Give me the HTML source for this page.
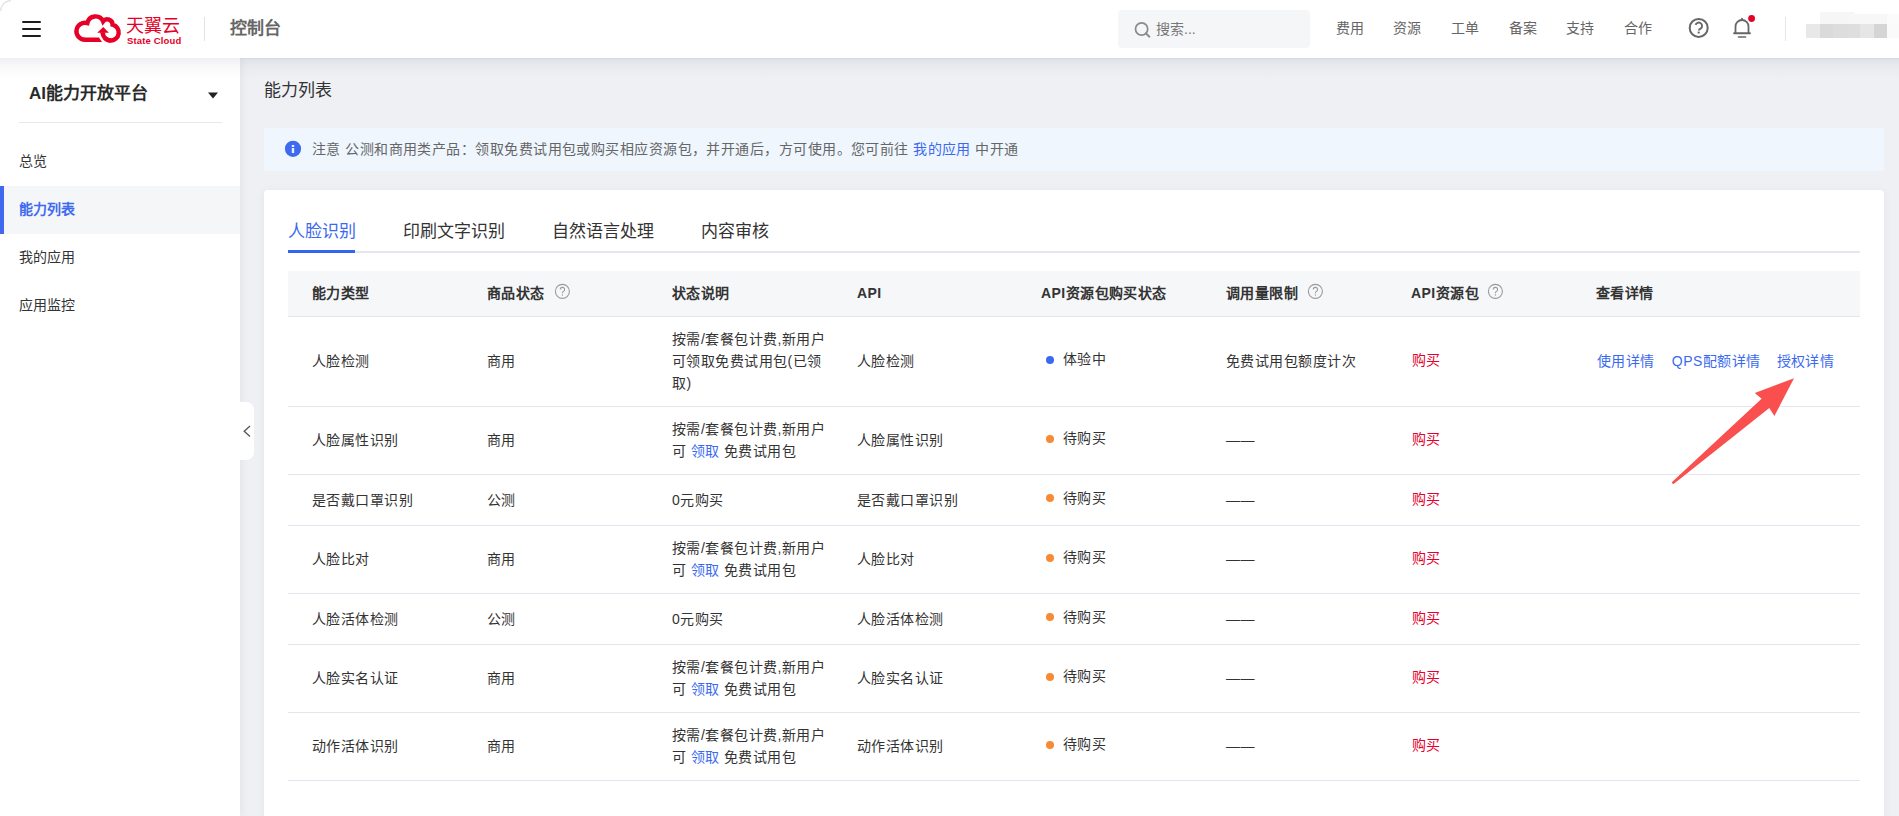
<!DOCTYPE html>
<html lang="zh-CN"><head><meta charset="utf-8">
<style>
*{margin:0;padding:0;box-sizing:border-box}
html,body{width:1899px;height:816px;overflow:hidden;background:#eff0f3;font-family:"Liberation Sans",sans-serif;color:#333}
.abs{position:absolute}
#hdr{position:absolute;left:0;top:0;width:1899px;height:58px;background:#fff;z-index:3;}
#side{position:absolute;left:0;top:58px;width:240px;height:758px;background:#fff;z-index:2;box-shadow:2px 0 8px rgba(0,20,60,0.05)}
.nav{position:absolute;top:18px;font-size:14px;color:#666;line-height:21px;letter-spacing:0.45px}
.menu{position:absolute;left:0;width:240px;height:48px;line-height:47px;padding-left:19px;font-size:14px;color:#333}
.menu.act{background:#f5f6f8;color:#3f6af0;font-weight:bold;border-left:4px solid #3f6af0;padding-left:15px}
#main{position:absolute;left:240px;top:58px;width:1659px;height:758px}
.tab{position:absolute;top:221px;font-size:17px;line-height:22px;color:#333}
table{border-collapse:collapse;table-layout:fixed}
td,th{font-size:14px;letter-spacing:0.45px;line-height:22px;color:#333;text-align:left;padding:0 0 0 24px;vertical-align:middle;font-weight:normal}
th{font-weight:bold;height:45px}
tr.r td,tr.r th{border-bottom:1px solid #e3e6ee}
.q{display:inline-block;width:14px;height:14px;border:1px solid #999;border-radius:50%;font-size:10px;line-height:12px;text-align:center;color:#999;font-weight:normal;margin-left:10px;vertical-align:1px}
a{color:#3b6af0;text-decoration:none}
.red{color:#e6002d;position:relative;left:1px;top:-1px}
.dot{display:inline-block;width:8px;height:8px;border-radius:50%;margin:0 9px 0 5px;vertical-align:0.5px}
.st{position:relative;top:-2px}
</style></head><body>
<div id="hdr">
  <!-- hamburger -->
  <div class="abs" style="left:22px;top:21px;width:19px;height:2px;background:#1e1e1e;border-radius:1px"></div>
  <div class="abs" style="left:22px;top:28px;width:19px;height:2px;background:#1e1e1e;border-radius:1px"></div>
  <div class="abs" style="left:22px;top:35px;width:19px;height:2px;background:#1e1e1e;border-radius:1px"></div>
  <!-- logo -->
  <svg class="abs" style="left:70px;top:10px" width="55" height="38" viewBox="0 0 55 38">
    <path d="M14.9 29.7 A8.5 8.5 0 1 1 17.36 13.06 A8.3 8.3 0 0 1 33.1 11.37 A5.3 5.3 0 0 1 42.6 14.73 A8 8 0 1 1 32.7 22.5" fill="none" stroke="#e60027" stroke-width="4.4"/>
    <path d="M14.3 27.5 L29 27.5 L32 31.9 L14.3 31.9Z" fill="#e60027"/>
    <path d="M32.7 23.5 A8 8 0 0 0 35 28.2" fill="none" stroke="#fff" stroke-width="8"/>
    <path d="M32.7 22.5 A8 8 0 0 0 40.7 30.5" fill="none" stroke="#e60027" stroke-width="4.6"/>
    <path d="M27.2 22.8 L33.3 17.1 L38.9 22.8Z" fill="#e60027"/>
  </svg>
  <div class="abs" style="left:126px;top:16px;font-size:18px;line-height:20px;color:#e60027;letter-spacing:0.2px">天翼云</div>
  <div class="abs" style="left:127px;top:35.5px;font-size:9.5px;line-height:10px;color:#e60027;letter-spacing:0.15px;font-weight:bold">State Cloud</div>
  <div class="abs" style="left:204px;top:17px;width:1px;height:24px;background:#e3e3e3"></div>
  <div class="abs" style="left:230px;top:18px;font-size:17px;line-height:22px;color:#666;font-weight:bold">控制台</div>
  <!-- search -->
  <div class="abs" style="left:1118px;top:10px;width:192px;height:38px;background:#f5f6f8;border-radius:4px"></div>
  <div class="abs" style="left:1156px;top:19px;font-size:14px;line-height:20px;color:#777">搜索...</div>
  <svg class="abs" style="left:1118px;top:10px" width="40" height="38" viewBox="1118 10 40 38">
    <circle cx="1141.6" cy="29" r="6.1" fill="none" stroke="#8a8a8a" stroke-width="1.7"/>
    <path d="M1145.8 33.3 L1149.4 36.7" stroke="#8a8a8a" stroke-width="1.9" stroke-linecap="round"/>
  </svg>
  <svg class="abs" style="left:1680px;top:8px" width="80" height="40" viewBox="1680 8 80 40">
    <circle cx="1698.7" cy="27.9" r="9" fill="none" stroke="#666" stroke-width="2"/>
    <path d="M1695.6 24.9 A3.3 3.3 0 1 1 1701.2 28.1 Q1698.9 29.4 1698.8 30.5" fill="none" stroke="#666" stroke-width="1.9"/>
    <rect x="1697.7" y="31.6" width="2" height="1.9" fill="#666"/>
    <path d="M1735.5 33 V26.5 A6.5 6.5 0 0 1 1748.5 26.5 V33" fill="none" stroke="#666" stroke-width="1.8"/>
    <path d="M1734.1 33.2 H1749.9" stroke="#666" stroke-width="1.9" stroke-linecap="round"/>
    <path d="M1738.5 37 H1745.5" stroke="#666" stroke-width="1.6" stroke-linecap="round"/>
    <path d="M1742 18.6 V20.2" stroke="#666" stroke-width="1.8" stroke-linecap="round"/>
    <circle cx="1751.6" cy="18.5" r="3.4" fill="#e60027"/>
  </svg>
  <div class="nav" style="left:1336px">费用</div>
  <div class="nav" style="left:1393px">资源</div>
  <div class="nav" style="left:1451px">工单</div>
  <div class="nav" style="left:1509px">备案</div>
  <div class="nav" style="left:1566px">支持</div>
  <div class="nav" style="left:1624px">合作</div>
  <div class="abs" style="left:1785px;top:17px;width:1px;height:24px;background:#e4e6ec"></div>
  <div class="abs" style="left:1820px;top:12px;width:34px;height:12px;background:#f6f6f6"></div>
  <div class="abs" style="left:1847px;top:14px;width:40px;height:10px;background:#f7f7f7"></div>
  <div class="abs" style="left:1887px;top:14px;width:12px;height:10px;background:#fbfbfb"></div>
  <div class="abs" style="left:1806px;top:24px;width:14px;height:14px;background:#e8e8e8"></div>
  <div class="abs" style="left:1820px;top:24px;width:13px;height:14px;background:#dadada"></div>
  <div class="abs" style="left:1833px;top:24px;width:14px;height:14px;background:#dddddd"></div>
  <div class="abs" style="left:1847px;top:24px;width:13px;height:14px;background:#dedede"></div>
  <div class="abs" style="left:1860px;top:24px;width:14px;height:14px;background:#e6e6e6"></div>
  <div class="abs" style="left:1874px;top:24px;width:13px;height:14px;background:#d5d5d5"></div>
  <div class="abs" style="left:1887px;top:24px;width:12px;height:14px;background:#fafafa"></div>
</div>
<div class="abs" style="left:0;top:58px;width:1899px;height:20px;background:linear-gradient(rgba(30,40,90,0.075),rgba(30,40,90,0.03) 40%,rgba(30,40,90,0));z-index:3"></div>
<div class="abs" style="left:240px;top:58px;width:1659px;height:2px;background:linear-gradient(rgba(30,40,90,0.05),rgba(30,40,90,0.0));z-index:3"></div>
<div id="side">
  <div class="abs" style="left:29px;top:25px;font-size:17px;line-height:22px;font-weight:bold;color:#2a2a2a">AI能力开放平台</div>
  <div class="abs" style="left:19px;top:64px;width:203px;height:1px;background:#e6e8ee"></div>
  <svg class="abs" style="left:206px;top:33px" width="14" height="10" viewBox="0 0 14 10"><path d="M2 1.5 H12 L7 7.5Z" fill="#222"/></svg>
  <div class="menu" style="top:80px">总览</div>
  <div class="menu act" style="top:128px">能力列表</div>
  <div class="menu" style="top:176px">我的应用</div>
  <div class="menu" style="top:224px">应用监控</div>
</div>
<div class="abs" style="left:240px;top:402px;width:14px;height:58px;background:#fff;border-radius:0 8px 8px 0;z-index:2"></div>
<svg class="abs" style="left:240px;top:420px;z-index:2" width="14" height="22" viewBox="0 0 14 22"><path d="M10 6 L4.2 11.2 L10 16.4" fill="none" stroke="#555" stroke-width="1.3"/></svg>
<svg class="abs" style="left:0;top:0;z-index:4" width="14" height="14" viewBox="0 0 14 14"><path d="M0.6 11 A10.4 10.4 0 0 1 11 0.6" fill="none" stroke="#e2e2e2" stroke-width="1.2"/></svg>
<div class="abs" style="left:264px;top:80px;font-size:17px;line-height:22px;color:#333">能力列表</div>
<div class="abs" style="left:264px;top:128px;width:1620px;height:43px;background:#eff6fe"></div>
<svg class="abs" style="left:284px;top:140px" width="18" height="18" viewBox="0 0 18 18"><circle cx="9" cy="8.8" r="8.1" fill="#3f6af0"/><rect x="7.8" y="5" width="2.4" height="2" fill="#e8efff"/><rect x="7.8" y="8" width="2.4" height="5" fill="#e8efff"/></svg>
<div class="abs" style="left:312px;top:139px;font-size:14px;letter-spacing:0.45px;line-height:20px;color:#666">注意 公测和商用类产品：领取免费试用包或购买相应资源包，并开通后，方可使用。您可前往 <a>我的应用</a> 中开通</div>
<div class="abs" style="left:264px;top:190px;width:1620px;height:640px;background:#fff;border-radius:4px;box-shadow:0 1px 10px rgba(20,30,60,0.05)"></div>
<div class="tab" style="left:288px;color:#3b6af0">人脸识别</div>
<div class="tab" style="left:403px">印刷文字识别</div>
<div class="tab" style="left:552px">自然语言处理</div>
<div class="tab" style="left:701px">内容审核</div>
<div class="abs" style="left:288px;top:251px;width:1572px;height:2px;background:#e4e7ee"></div>
<div class="abs" style="left:288px;top:250px;width:67px;height:3px;background:#3366f0"></div>
<table class="abs" style="left:288px;top:271px;width:1572px">
<colgroup><col style="width:175px"><col style="width:185px"><col style="width:185px"><col style="width:184px"><col style="width:185px"><col style="width:185px"><col style="width:185px"><col style="width:288px"></colgroup>
<tr class="r" style="background:#f6f7f9"><th>能力类型</th><th>商品状态</th><th>状态说明</th><th>API</th><th>API资源包购买状态</th><th>调用量限制</th><th>API资源包</th><th>查看详情</th></tr>
<tr class="r" style="height:90px"><td>人脸检测</td><td>商用</td><td>按需/套餐包计费,新用户可领取免费试用包(已领取)</td><td>人脸检测</td><td class="st"><span class="dot" style="background:#3b6af0"></span>体验中</td><td>免费试用包额度计次</td><td class="red">购买</td><td style="white-space:nowrap"><a style="margin-left:1px">使用详情</a><a style="margin-left:17px">QPS配额详情</a><a style="margin-left:16px">授权详情</a></td></tr>
<tr class="r" style="height:68px"><td>人脸属性识别</td><td>商用</td><td>按需/套餐包计费,新用户可 <a>领取</a> 免费试用包</td><td>人脸属性识别</td><td class="st"><span class="dot" style="background:#f98a34"></span>待购买</td><td>——</td><td class="red">购买</td><td></td></tr>
<tr class="r" style="height:51px"><td>是否戴口罩识别</td><td>公测</td><td>0元购买</td><td>是否戴口罩识别</td><td class="st"><span class="dot" style="background:#f98a34"></span>待购买</td><td>——</td><td class="red">购买</td><td></td></tr>
<tr class="r" style="height:68px"><td>人脸比对</td><td>商用</td><td>按需/套餐包计费,新用户可 <a>领取</a> 免费试用包</td><td>人脸比对</td><td class="st"><span class="dot" style="background:#f98a34"></span>待购买</td><td>——</td><td class="red">购买</td><td></td></tr>
<tr class="r" style="height:51px"><td>人脸活体检测</td><td>公测</td><td>0元购买</td><td>人脸活体检测</td><td class="st"><span class="dot" style="background:#f98a34"></span>待购买</td><td>——</td><td class="red">购买</td><td></td></tr>
<tr class="r" style="height:68px"><td>人脸实名认证</td><td>商用</td><td>按需/套餐包计费,新用户可 <a>领取</a> 免费试用包</td><td>人脸实名认证</td><td class="st"><span class="dot" style="background:#f98a34"></span>待购买</td><td>——</td><td class="red">购买</td><td></td></tr>
<tr class="r" style="height:68px"><td>动作活体识别</td><td>商用</td><td>按需/套餐包计费,新用户可 <a>领取</a> 免费试用包</td><td>动作活体识别</td><td class="st"><span class="dot" style="background:#f98a34"></span>待购买</td><td>——</td><td class="red">购买</td><td></td></tr>
</table>
<svg class="abs" style="left:553px;top:282px" width="18" height="18" viewBox="0 0 18 18"><circle cx="9.4" cy="9.4" r="7" fill="none" stroke="#9a9a9a" stroke-width="1.1"/><path d="M7.2 7.6 A2.2 2.2 0 1 1 10.2 9.6 Q9.4 10.1 9.4 11.2" fill="none" stroke="#9a9a9a" stroke-width="1.1"/><rect x="8.9" y="12.3" width="1.1" height="1.3" fill="#9a9a9a"/></svg>
<svg class="abs" style="left:1306px;top:282px" width="18" height="18" viewBox="0 0 18 18"><circle cx="9.4" cy="9.4" r="7" fill="none" stroke="#9a9a9a" stroke-width="1.1"/><path d="M7.2 7.6 A2.2 2.2 0 1 1 10.2 9.6 Q9.4 10.1 9.4 11.2" fill="none" stroke="#9a9a9a" stroke-width="1.1"/><rect x="8.9" y="12.3" width="1.1" height="1.3" fill="#9a9a9a"/></svg>
<svg class="abs" style="left:1486px;top:282px" width="18" height="18" viewBox="0 0 18 18"><circle cx="9.4" cy="9.4" r="7" fill="none" stroke="#9a9a9a" stroke-width="1.1"/><path d="M7.2 7.6 A2.2 2.2 0 1 1 10.2 9.6 Q9.4 10.1 9.4 11.2" fill="none" stroke="#9a9a9a" stroke-width="1.1"/><rect x="8.9" y="12.3" width="1.1" height="1.3" fill="#9a9a9a"/></svg>
<svg class="abs" style="left:1660px;top:370px;z-index:5" width="140" height="120" viewBox="1660 370 140 120"><path d="M1671.8 482.3 L1761.6 398.7 L1754.8 392.9 L1794 378.3 L1774.4 415.9 L1769.3 408.1 L1673.6 484.1 Q1672.2 484.2 1671.8 482.3Z" fill="#f94f4f"/></svg>
</body></html>
